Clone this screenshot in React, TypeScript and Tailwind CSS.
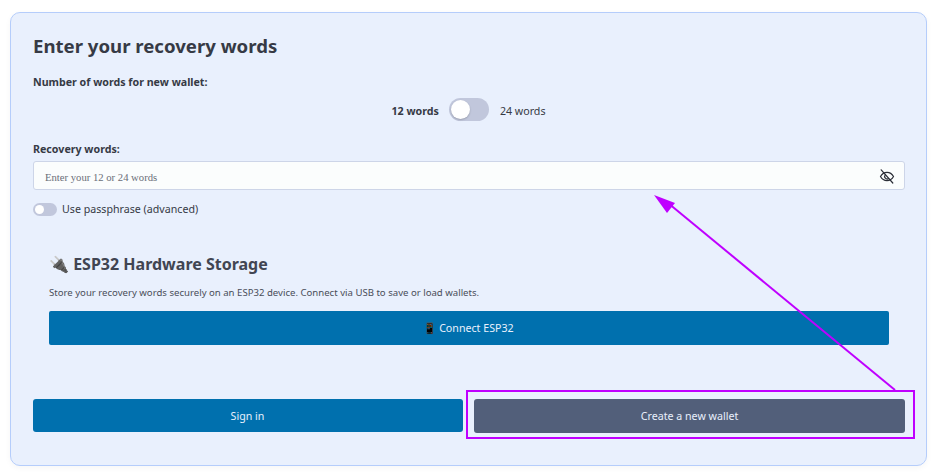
import React from "react";

export default function App() {
  return (
    <div className="relative h-[473px] w-[937px] overflow-hidden bg-white font-['Noto_Sans',sans-serif] text-[#363a45]">
      <div className="mx-[10px] mt-[12px] h-[454px] rounded-[10px] border border-[#b5cdfb] bg-[#e9f0fd] pt-[19px] pr-[21px] pl-[22px] shadow-[0_2px_6px_rgba(0,0,0,0.04)]">
        <h2 className="h-[28px] text-[18.6px] leading-[28px] font-bold">Enter your recovery words</h2>
        <div className="mt-[13px] h-[18px] text-[10.67px] leading-[18px] font-bold">Number of words for new wallet:</div>
        <div className="mt-[6px] flex h-[24px] items-center justify-center gap-[10px] text-[10.67px]">
          <span className="-ml-[1px] pt-[3px] font-bold">12 words</span>
          <span className="flex h-[23px] w-[40px] items-center rounded-full bg-[#c1c7dc] pl-[2px]">
            <span className="h-[19px] w-[19px] rounded-full bg-white shadow-[0_1px_2px_rgba(0,0,0,0.2)]" />
          </span>
          <span className="ml-[1px] pt-[3px]">24 words</span>
        </div>
        <div className="mt-[19px] h-[18px] text-[10.67px] leading-[18px] font-bold">Recovery words:</div>
        <div className="mt-[3px] flex h-[29px] items-center justify-between rounded-[3px] border border-[#cdd5e8] bg-[#fbfdfd] pr-[9px] pl-[11px]">
          <span className="pt-[2px] font-['Liberation_Serif',serif] text-[10.67px] text-[#6a6e78]">Enter your 12 or 24 words</span>
          <svg width="16" height="16" viewBox="0 0 16 16" fill="none" stroke="#2b2e37" strokeWidth="1.2" strokeLinecap="round">
            <path d="M1.5 8.5C3 5.8 5.4 4.4 8 4.4s5 1.4 6.5 4.1c-1.5 2.7-3.9 4.1-6.5 4.1s-5-1.4-6.5-4.1z" />
            <path d="M6.2 6.8a2.6 2.6 0 0 0 3.4 3.8" />
            <path d="M2.2 1.8 13.8 15" />
          </svg>
        </div>
        <div className="mt-[12px] flex h-[15px] items-center gap-[5px] text-[10.67px]">
          <span className="flex h-[13px] w-[24px] items-center rounded-full bg-[#c1c7dc] pl-[2px]">
            <span className="h-[9px] w-[9px] rounded-full bg-white" />
          </span>
          <span className="pb-[1px]">Use passphrase (advanced)</span>
        </div>
        <div className="mx-[16px] mt-[34px]">
          <h3 className="h-[26px] text-[16px] leading-[26px] font-bold text-[#414552]">🔌 ESP32 Hardware Storage</h3>
          <p className="mt-[8px] h-[15px] text-[9.6px] leading-[15px] text-[#4a4e59]">Store your recovery words securely on an ESP32 device. Connect via USB to save or load wallets.</p>
          <button className="mt-[11px] h-[34px] w-full rounded-[2px] bg-[#0070ae] pr-[1px] text-[10.67px] text-[#e9f0fd]">📱 Connect ESP32</button>
        </div>
        <div className="mt-[54px] flex gap-[11px]">
          <button className="h-[33px] w-[430px] rounded-[3px] bg-[#0070ae] pr-[1px] text-[10.67px] text-[#e9f0fd]">Sign in</button>
          <button className="h-[34px] flex-1 rounded-[3px] bg-[#525f7a] text-[10.67px] text-[#e9f0fd]">Create a new wallet</button>
        </div>
      </div>
      <div className="absolute top-[390px] left-[466px] h-[49px] w-[449px] border-2 border-[#bf00ff]" />
      <svg className="absolute top-0 left-0" width="937" height="473" fill="none">
        <line x1="895" y1="390" x2="668" y2="203" stroke="#bf00ff" strokeWidth="2" />
        <polygon points="654,195 675,203 667,213" fill="#bf00ff" />
      </svg>
    </div>
  );
}
